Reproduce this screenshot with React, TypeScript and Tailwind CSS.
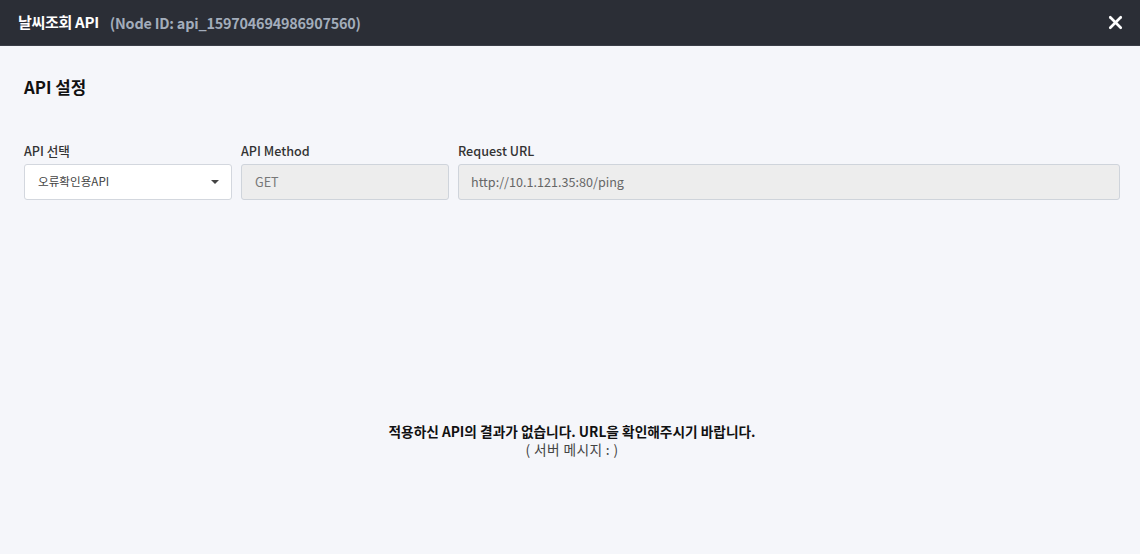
import React from 'react';
import { X } from 'lucide-react';

export default function App() {
  return (
    <div
      className="w-[1140px] h-[554px] flex flex-col bg-[#f5f6fa] text-[#222]"
      style={{ fontFamily: '"Noto Sans CJK KR", "Noto Sans", sans-serif' }}
    >
      {/* header */}
      <div className="h-[46px] shrink-0 bg-[#2b2e36] flex items-center pl-[18px] pr-[14px] border-b border-[#3a3e47]">
        <span className="text-white font-bold text-[15px] tracking-[-0.3px]">날씨조회 API</span>
        <span className="ml-[11px] text-[#a3adbb] font-bold text-[14.4px] tracking-[-0.2px]">
          (Node ID: api_159704694986907560)
        </span>
        <button className="ml-auto text-white">
          <X className="w-[21px] h-[21px]" strokeWidth={3} />
        </button>
      </div>

      {/* body */}
      <div className="flex-1 flex flex-col pl-[24px] pr-[20px]">
        <h2 className="mt-[29px] text-[16.8px] font-bold text-[#111] leading-[24px]">API 설정</h2>

        <div className="mt-[43px] flex gap-[9px]">
          <div className="w-[208px] flex flex-col">
            <label className="text-[12.6px] font-medium text-[#333] leading-[18px] mb-[4px]">API 선택</label>
            <div className="h-[36px] bg-white border border-[#d3d7de] rounded-[3px] flex items-center pl-[13px] pr-[12px]">
              <span className="text-[11.6px] text-[#444]">오류확인용API</span>
              <span className="ml-auto w-0 h-0 border-l-[4px] border-r-[4px] border-t-[4px] border-l-transparent border-r-transparent border-t-[#444]" />
            </div>
          </div>
          <div className="w-[208px] flex flex-col">
            <label className="text-[12.6px] font-medium text-[#333] leading-[18px] mb-[4px]">API Method</label>
            <div className="h-[36px] bg-[#ededed] border border-[#cfd4db] rounded-[3px] flex items-center pl-[13px]">
              <span className="text-[12.6px] text-[#777]">GET</span>
            </div>
          </div>
          <div className="flex-1 flex flex-col">
            <label className="text-[12.6px] font-medium text-[#333] leading-[18px] mb-[4px]">Request URL</label>
            <div className="h-[36px] bg-[#ededed] border border-[#cfd4db] rounded-[3px] flex items-center pl-[12px]">
              <span className="text-[12.6px] text-[#666]">http://10.1.121.35:80/ping</span>
            </div>
          </div>
        </div>

        <div className="mt-[222px] flex flex-col items-center text-center">
          <p className="text-[13.7px] font-bold text-[#111] leading-[18px]">
            적용하신 API의 결과가 없습니다. URL을 확인해주시기 바랍니다.
          </p>
          <p className="text-[13.7px] text-[#444] leading-[18px] tracking-[0.4px]">( 서버 메시지 : )</p>
        </div>
      </div>
    </div>
  );
}
